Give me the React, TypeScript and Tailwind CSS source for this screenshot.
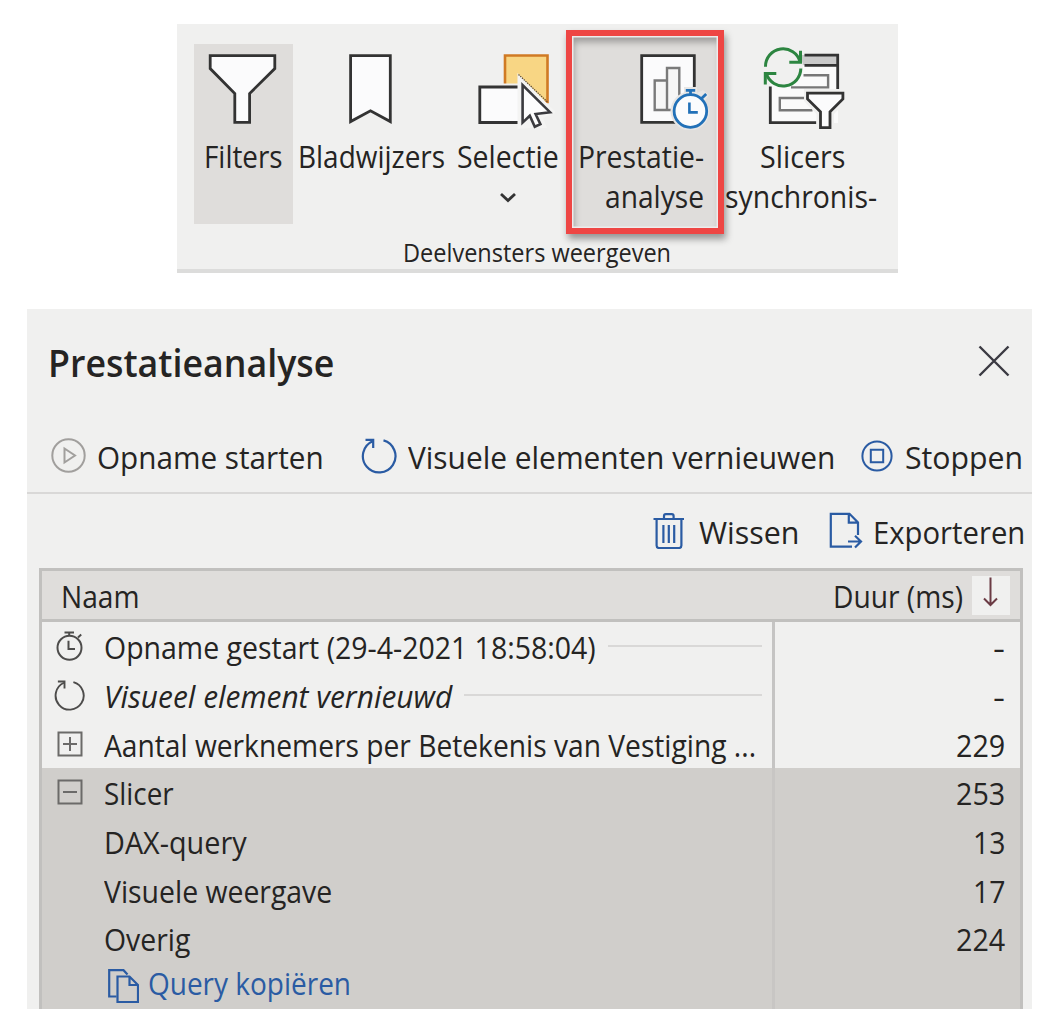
import { useLayoutEffect, useRef, useState } from "react";
import type { ReactNode } from "react";

// Squeezes a single line of text to the given advance width.
function Fit({ w, children }: { w: number; children: string }) {
  const ref = useRef<HTMLSpanElement>(null);
  const [scale, setScale] = useState(1);

  useLayoutEffect(() => {
    if (ref.current) setScale(w / ref.current.offsetWidth);
  }, [w]);

  return (
    <span className="block shrink-0 whitespace-nowrap" style={{ width: w }}>
      <span className="block origin-left" style={{ transform: `scaleX(${scale})` }}>
        <span ref={ref} className="inline-block">
          {children}
        </span>
      </span>
    </span>
  );
}

function FilterIcon() {
  return (
    <svg className="h-20 w-[76px]" viewBox="205.5 50 76 80" fill="#fbfbfc" stroke="#333" strokeWidth="2.8">
      <path d="M210.7 55.6H275.3V68.6L250.1 93.5V122.4H235.3V93.5L210.7 68.6Z" />
    </svg>
  );
}

function BookmarkIcon() {
  return (
    <svg className="h-20 w-[50px]" viewBox="346.5 50 50 80" fill="#fbfbfc" stroke="#333" strokeWidth="2.8">
      <path d="M350.1 55.6H389.8V121.6L370 110.8L350.1 121.6Z" />
    </svg>
  );
}

function SelectionIcon() {
  return (
    <svg className="h-20 w-20" viewBox="475 50 80 80">
      <path d="M505 55.5H547.5V102H505Z" fill="#f8d684" stroke="#d07a24" strokeWidth="2.6" />
      <path d="M476 83.5H521V126H476Z" fill="#f0f0ef" />
      <path d="M479.8 87H522V122.5H479.8Z" fill="#fbfbfc" stroke="#333" strokeWidth="2.8" />
      <path d="M517.5 73L556 112.5L543 118L547 128H530L517.5 129Z" fill="#f4f4f3" />
      <path d="M518.5 74.5L547.5 102" stroke="#5a4a35" strokeWidth="1.2" strokeDasharray="1.4 1" />
      <path
        d="M522.6 85V122.6L529.8 115.8L534.8 126.8L540.4 124.2L535.6 114L550 112.2Z"
        fill="#fdfdfd"
        stroke="#3b3b3f"
        strokeWidth="2.6"
      />
    </svg>
  );
}

function PerformanceIcon() {
  return (
    <svg className="h-20 w-[74px]" viewBox="637 50 74 80" fill="none">
      <path d="M641.7 55.6H694.3V122.4H641.7Z" fill="#fbfbfc" stroke="#333" strokeWidth="2.8" />
      <path d="M654.7 80.5H667V110H654.7ZM667 68H679.3V110H667Z" fill="#f6f6f6" stroke="#7a7a7a" strokeWidth="2.4" />
      <path d="M684 87H697V93L703 90L709 95L705 101L709.5 111A19.5 19.5 0 1 1 684 92.5Z" fill="#e7e6e5" />
      <circle cx="690.4" cy="111" r="16.3" fill="#fbfcfd" stroke="#2271b8" strokeWidth="2.8" />
      <path d="M685.8 90.3H695.2M690.5 90.3V95M701.5 98.5L706.2 94" stroke="#2271b8" strokeWidth="2.8" />
      <path d="M689.4 102.5V112.4H697.8" stroke="#2271b8" strokeWidth="2.6" />
    </svg>
  );
}

function SyncSlicersIcon() {
  return (
    <svg className="h-[84px] w-[86px]" viewBox="763.5 46 86 84" fill="none">
      <path d="M771.8 55H839.5V123H771.8Z" fill="#fafafa" />
      <path d="M803 55H839.5V65.3H803Z" fill="#c9c9c9" />
      <path d="M806 55.2H839.2V89M806 65.3H839M771.8 86.5V122.6H817.8" stroke="#333" strokeWidth="2.8" />
      <path d="M805 75.3H829.6V87.4H792.5M806 98H781.3V110.2H814" stroke="#777" strokeWidth="2.4" />
      <circle cx="784.5" cy="67.5" r="20" fill="#f0f0ef" />
      <path d="M805.5 89H848V101L835.5 114V131H818V114L805.5 101Z" fill="#f0f0ef" />
      <path d="M767 66.8A17.6 17.6 0 0 1 801.6 61.8M802.3 68.6A17.6 17.6 0 0 1 768 74" stroke="#2c8540" strokeWidth="3" />
      <path d="M802 50.8V62.3H790.8M766.8 84.6V73.4H777.8" stroke="#2c8540" strokeWidth="3" />
      <path
        d="M809 93.2H844.4V99L831.5 111.8V127.6H822V111.8L809 99Z"
        fill="#fbfbfc"
        stroke="#333"
        strokeWidth="2.8"
      />
    </svg>
  );
}

function RefreshIcon({ className }: { className: string }) {
  return (
    <svg className={className} viewBox="0 0 36 38" fill="none" stroke="currentColor" strokeWidth="2.2">
      <path d="M22.5 3.4A16.3 16.3 0 1 1 11.6 4.2" />
      <path d="M4.5 2.8H12.2V11" />
    </svg>
  );
}

function ExpandIcon({ open }: { open: boolean }) {
  return (
    <svg className="size-[26px]" viewBox="0 0 26 26" fill="none" stroke="#6b6a69" strokeWidth="2">
      <path d="M1.5 1.5H24.5V24.5H1.5Z" />
      <path d={open ? "M6 13H20" : "M6 13H20M13 6V20"} />
    </svg>
  );
}

function StopwatchIcon() {
  return (
    <svg className="h-[30px] w-[27px]" viewBox="0 0 27 30" fill="none" stroke="#4d4c4b" strokeWidth="2">
      <circle cx="13.5" cy="16.8" r="12" />
      <path d="M8.5 1.4H18M13.2 1.4V5M22 6.5L25.2 3.6M12.5 9.8V18H19" />
    </svg>
  );
}

function RibbonItem({ className, icon, children }: { className: string; icon: ReactNode; children: ReactNode }) {
  return (
    <div className={`flex h-[180px] shrink-0 flex-col items-center ${className}`}>
      <div className="flex h-[92px] shrink-0 items-end pb-1.5">{icon}</div>
      {children}
    </div>
  );
}

function Ribbon() {
  return (
    <section className="ml-[177px] flex h-[249px] w-[721px] flex-col border-b-4 border-[#dcdcdb] bg-[#f0f0ef] pt-1.5 pl-[17px] text-[31px] leading-10">
      <div className="flex h-[204px] shrink-0">
        <RibbonItem className="mt-3.5 w-[99px] bg-[#dfdddb]" icon={<div className="pr-0.5"><FilterIcon /></div>}>
          <Fit w={79}>Filters</Fit>
        </RibbonItem>
        <RibbonItem className="mt-3.5 w-[157px]" icon={<BookmarkIcon />}>
          <Fit w={147}>Bladwijzers</Fit>
        </RibbonItem>
        <RibbonItem className="mt-3.5 w-[116px] pr-px" icon={<div className="pl-3.5"><SelectionIcon /></div>}>
          <Fit w={102}>Selectie</Fit>
          <svg className="mt-[13px] h-4 w-5" viewBox="0 0 20 16" fill="none" stroke="#333" strokeWidth="2.8">
            <path d="M3 5L10 11.5L17 5" />
          </svg>
        </RibbonItem>
        <div className="z-10 h-[204px] w-[158px] shrink-0 border-[6px] border-[#ee4644] bg-[#dfdddb] shadow-[2px_5px_7px_rgba(0,0,0,0.38),inset_0_0_0_1.5px_#eeecec,inset_2px_6px_7px_rgba(0,0,0,0.3)]">
          <div className="flex flex-col items-end pr-3.5">
            <div className="flex h-[100px] items-end pb-1.5">
              <div className="-mr-[7px]">
                <PerformanceIcon />
              </div>
            </div>
            <Fit w={126}>Prestatie-</Fit>
            <Fit w={99}>analyse</Fit>
          </div>
        </div>
        <RibbonItem className="mt-3.5 w-[154px]" icon={<div className="pl-[7px]"><SyncSlicersIcon /></div>}>
          <div className="pl-0.5">
            <Fit w={85}>Slicers</Fit>
          </div>
          <Fit w={152}>synchronis-</Fit>
        </RibbonItem>
      </div>
      <div className="ml-[209px] text-[25px] leading-9">
        <Fit w={268}>Deelvensters weergeven</Fit>
      </div>
    </section>
  );
}

type Row = {
  name: string;
  width: number;
  value: string;
  valueWidth: number;
  icon?: ReactNode;
  line?: boolean;
  italic?: boolean;
  selected?: boolean;
};

const rows: Row[] = [
  { name: "Opname gestart (29-4-2021 18:58:04)", width: 492, value: "-", valueWidth: 12, icon: <StopwatchIcon />, line: true },
  {
    name: "Visueel element vernieuwd",
    width: 348,
    value: "-",
    valueWidth: 12,
    icon: <RefreshIcon className="h-[33px] w-[31px] text-[#4d4c4b]" />,
    line: true,
    italic: true,
  },
  { name: "Aantal werknemers per Betekenis van Vestiging ...", width: 652, value: "229", valueWidth: 49, icon: <ExpandIcon open={false} /> },
  { name: "Slicer", width: 70, value: "253", valueWidth: 49, icon: <ExpandIcon open />, selected: true },
  { name: "DAX-query", width: 143, value: "13", valueWidth: 32, selected: true },
  { name: "Visuele weergave", width: 228, value: "17", valueWidth: 32, selected: true },
  { name: "Overig", width: 86, value: "224", valueWidth: 49, selected: true },
];

function ResultRow({ row }: { row: Row }) {
  return (
    <div className={`flex h-[48.7px] shrink-0 items-center ${row.selected ? "bg-[#d0cecb]" : ""}`}>
      <div
        className={`flex h-full w-[733px] shrink-0 items-center border-r-[3px] pr-2.5 ${row.selected ? "border-[#c8c6c4]" : "border-[#c5c4c3]"}`}
      >
        <div className="flex w-[62px] shrink-0 justify-center pr-[7px]">{row.icon}</div>
        <div className={`pt-0.5 ${row.italic ? "italic" : ""}`}>
          <Fit w={row.width}>{row.name}</Fit>
        </div>
        {row.line && <div className="ml-3 h-0.5 flex-1 bg-[#d9d8d7]" />}
      </div>
      <div className="flex flex-1 justify-end pt-0.5 pr-[15px]">
        <Fit w={row.valueWidth}>{row.value}</Fit>
      </div>
    </div>
  );
}

function ResultTable() {
  return (
    <div className="ml-3 flex h-[441px] w-[984px] flex-col overflow-hidden border-x-[3px] border-t-[3px] border-[#c1c0be]">
      <div className="flex h-[51px] shrink-0 items-center border-b-[3px] border-[#c1c0be] bg-[#dfdddb] pr-2.5 pl-[19px]">
        <div className="pt-0.5">
          <Fit w={79}>Naam</Fit>
        </div>
        <div className="flex-1" />
        <div className="pt-0.5">
          <Fit w={130}>Duur (ms)</Fit>
        </div>
        <div className="ml-[9px] flex h-[39px] w-[38px] justify-center bg-[#f0f0ef]">
          <svg className="h-[34px] w-5" viewBox="0 0 20 34" fill="none" stroke="#6b3b44" strokeWidth="2">
            <path d="M9.5 1.5V29M3 22.5L9.5 29L16 22.5" />
          </svg>
        </div>
      </div>
      {rows.map((row) => (
        <ResultRow key={row.name} row={row} />
      ))}
      <div className="flex flex-1 bg-[#d0cecb] text-[#2a5ba3]">
        <div className="flex w-[733px] items-start border-r-[3px] border-[#c8c6c4] pl-[65px]">
          <svg className="mt-[5px] h-9 w-8" viewBox="0 0 32 36" fill="none" stroke="currentColor" strokeWidth="2.2">
            <path d="M9.5 28.5H2.2V2.2H16.5L20.5 6.5" />
            <path d="M10.5 8.5H22.5L31 17V34H10.5ZM22.5 8.5V17H31" />
          </svg>
          <div className="ml-[9px]">
            <Fit w={203}>Query kopiëren</Fit>
          </div>
        </div>
      </div>
    </div>
  );
}

function AnalyzerPanel() {
  return (
    <section className="mt-9 ml-[27px] flex h-[700px] w-[1005px] flex-col bg-[#f0f0ef] text-[31px] leading-10">
      <header className="flex h-[106px] shrink-0 items-center justify-between pr-[22px] pl-[21px]">
        <div className="text-[38px] font-semibold">
          <Fit w={286}>Prestatieanalyse</Fit>
        </div>
        <svg className="mb-0.5 size-8" viewBox="0 0 32 32" fill="none" stroke="#3b3a42" strokeWidth="2.4">
          <path d="M1.5 1.5L30.5 30.5M30.5 1.5L1.5 30.5" />
        </svg>
      </header>
      <div className="flex h-[79px] shrink-0 items-center border-b-2 border-[#d9d8d7] pt-1 pl-6">
        <svg className="size-[35px]" viewBox="0 0 35 35" fill="none" stroke="#a19f9d" strokeWidth="2">
          <circle cx="17.5" cy="17.5" r="16.2" />
          <path d="M13.5 10.5L24 17.5L13.5 24.5Z" />
        </svg>
        <div className="ml-[11px] pt-0.5">
          <Fit w={227}>Opname starten</Fit>
        </div>
        <RefreshIcon className="ml-[37px] h-[38px] w-9 text-[#2a5ba3]" />
        <div className="ml-[11px] pt-0.5">
          <Fit w={427}>Visuele elementen vernieuwen</Fit>
        </div>
        <svg className="ml-[26px] size-8" viewBox="0 0 32 32" fill="none" stroke="#2a5ba3" strokeWidth="2">
          <circle cx="16" cy="16" r="14.6" />
          <path d="M9.8 9.8H22.2V22.2H9.8Z" />
        </svg>
        <div className="ml-3 pt-0.5">
          <Fit w={118}>Stoppen</Fit>
        </div>
      </div>
      <div className="flex h-[74px] shrink-0 items-center justify-end pr-[7px] pb-px">
        <svg className="h-9 w-8" viewBox="0 0 32 36" fill="none" stroke="#2a5ba3" strokeWidth="2.2">
          <path d="M0.5 6H31M3.6 6V32.5Q3.6 35 6 35H26Q28.4 35 28.4 32.5V6M11 6V3Q11 1.2 12.8 1.2H18.8Q20.6 1.2 20.6 3V6" />
          <path d="M10.4 12V30M15.8 12V30M21.2 12V30" />
        </svg>
        <div className="ml-3.5 pt-0.5">
          <Fit w={100}>Wissen</Fit>
        </div>
        <svg className="ml-[30px] h-[37px] w-[34px]" viewBox="0 0 34 37" fill="none" stroke="#2a5ba3" strokeWidth="2.2">
          <path d="M23 34.6H1.8V1.8H20.5L29 10.5V23M19.8 1.8V10.6H29" />
          <path d="M19 29.5H32M26 23.8L32 29.5L26 35.5" />
        </svg>
        <div className="ml-2.5 pt-0.5">
          <Fit w={152}>Exporteren</Fit>
        </div>
      </div>
      <ResultTable />
    </section>
  );
}

export default function App() {
  return (
    <main className="h-[1024px] w-[1040px] overflow-hidden bg-white pt-6 font-['Open_Sans','Noto_Sans',sans-serif] text-[#252423]">
      <Ribbon />
      <AnalyzerPanel />
    </main>
  );
}
